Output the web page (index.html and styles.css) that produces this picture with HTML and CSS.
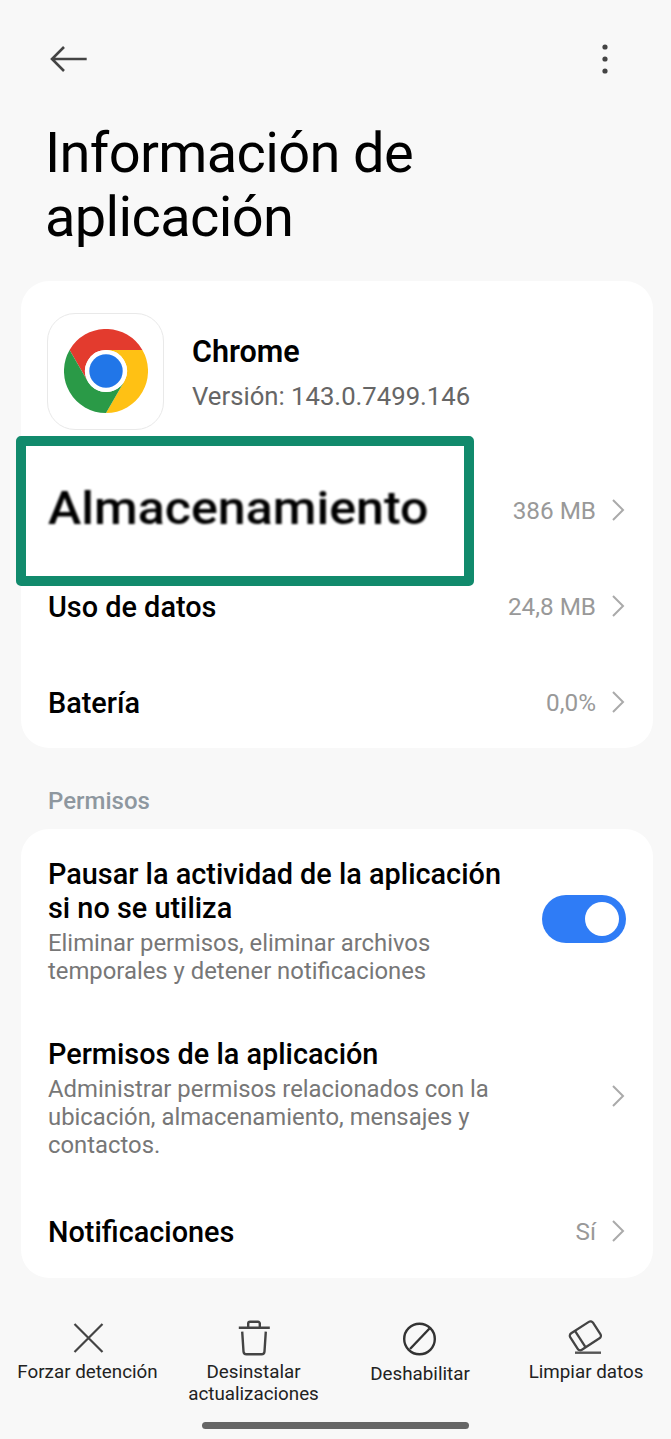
FILE: index.html
```html
<html>

<head>
    <meta charset="UTF-8">
    <meta name="viewport" content="width=device-width, initial-scale=1.0">
    <link rel="stylesheet" href="styles.css">
</head>

<body>
    <div class="page">
        <div class="topbar">
            <svg class="back" width="40" height="28" viewBox="0 0 40 28"><path d="M38.700 14H4M16 2 4 14l12 12" fill="none" stroke="#444" stroke-width="2.600"/></svg>
            <svg class="more" width="6" height="30" viewBox="0 0 6 30"><circle cx="3" cy="3" r="2.600" fill="#444"/><circle cx="3" cy="15" r="2.600" fill="#444"/><circle cx="3" cy="27" r="2.600" fill="#444"/></svg>
        </div>
        <h1 class="title">Información de aplicación</h1>

        <div class="card main-card">
            <div class="app">
                <div class="app-icon">
                    <svg width="84" height="84" viewBox="0 0 84 84">
                        <path d="M5.600 21A42 42 0 0 1 78.400 21H42A21 21 0 0 0 23.800 52.500Z" fill="#e33b2e"/>
                        <path d="M78.400 21A42 42 0 0 1 42 84L60.200 52.500A21 21 0 0 0 42 21Z" fill="#ffc114"/>
                        <path d="M42 84A42 42 0 0 1 5.600 21L23.800 52.500A21 21 0 0 0 60.200 52.500Z" fill="#2a9a47"/>
                        <circle cx="42" cy="42" r="21" fill="#fff"/>
                        <circle cx="42" cy="42" r="16.700" fill="#2176e8"/>
                    </svg>
                </div>
                <div class="app-text">
                    <div class="app-name">Chrome</div>
                    <div class="app-version">Versión: 143.0.7499.146</div>
                </div>
            </div>
            <div class="row"><span class="label"></span><span class="value">386 MB</span><svg class="chev" width="14" height="22" viewBox="0 0 14 22"><path d="M2 1l10 10L2 21" fill="none" stroke="#aaa" stroke-width="2"/></svg></div>
            <div class="row"><span class="label">Uso de datos</span><span class="value">24,8 MB</span><svg class="chev" width="14" height="22" viewBox="0 0 14 22"><path d="M2 1l10 10L2 21" fill="none" stroke="#aaa" stroke-width="2"/></svg></div>
            <div class="row"><span class="label">Batería</span><span class="value">0,0%</span><svg class="chev" width="14" height="22" viewBox="0 0 14 22"><path d="M2 1l10 10L2 21" fill="none" stroke="#aaa" stroke-width="2"/></svg></div>
        </div>

        <div class="section">Permisos</div>

        <div class="card perm-card">
            <div class="perm first">
                <div class="perm-text">
                    <div class="label">Pausar la actividad de la aplicación si no se utiliza</div>
                    <div class="desc">Eliminar permisos, eliminar archivos temporales y detener notificaciones</div>
                </div>
                <div class="toggle"><span class="knob"></span></div>
            </div>
            <div class="perm second">
                <div class="perm-text">
                    <div class="label">Permisos de la aplicación</div>
                    <div class="desc">Administrar permisos relacionados con la ubicación, almacenamiento, mensajes y contactos.</div>
                </div>
                <svg class="chev" width="14" height="22" viewBox="0 0 14 22"><path d="M2 1l10 10L2 21" fill="none" stroke="#aaa" stroke-width="2"/></svg>
            </div>
            <div class="row last"><span class="label">Notificaciones</span><span class="value">Sí</span><svg class="chev" width="14" height="22" viewBox="0 0 14 22"><path d="M2 1l10 10L2 21" fill="none" stroke="#aaa" stroke-width="2"/></svg></div>
        </div>

        <div class="actions">
            <div class="action">
                <svg width="32" height="36" viewBox="0 0 32 36"><path d="M2.500 4l28 28M30.500 4l-28 28" fill="none" stroke="#444" stroke-width="2.200"/></svg>
                <span>Forzar detención</span>
            </div>
            <div class="action">
                <svg width="32" height="36" viewBox="0 0 32 36"><path d="M4.200 11.700 5.500 31.500a3 3 0 0 0 3 2.800h15a3 3 0 0 0 3-2.800L27.800 11.700M.8 7.700h31M10.200 7V3.500a1.800 1.800 0 0 1 1.800-1.800h8a1.800 1.800 0 0 1 1.800 1.800V7" fill="none" stroke="#444" stroke-width="2.400"/></svg>
                <span>Desinstalar actualizaciones</span>
            </div>
            <div class="action disable">
                <svg width="36" height="36" viewBox="0 0 36 36"><circle cx="17.500" cy="19" r="15.300" fill="none" stroke="#333" stroke-width="2.400"/><path d="M8 29 27.500 8.500" stroke="#333" stroke-width="2.400"/></svg>
                <span>Deshabilitar</span>
            </div>
            <div class="action">
                <svg width="36" height="36" viewBox="0 0 36 36"><g transform="translate(17.350 15.800) rotate(-33)" fill="none" stroke="#444" stroke-width="2.300"><rect x="-13.500" y="-9.800" width="27" height="19.600" rx="3"/><path d="M-6 -9.800V9.800"/></g><path d="M7 32.700h26" stroke="#555" stroke-width="2.400"/></svg>
                <span>Limpiar datos</span>
            </div>
        </div>
        <div class="home-bar"></div>

        <div class="highlight"><span>Almacenamiento</span></div>
    </div>
</body>

</html>
```

FILE: styles.css
```css
* {
    box-sizing: border-box;
}
html, body {
    margin: 0;
    padding: 0;
}
.page {
    position: relative;
    width: 671px;
    height: 1439px;
    overflow: hidden;
    background: #f8f8f8;
    font-family: Roboto, "Noto Sans", sans-serif;
    color: #000;
}
.topbar {
    display: flex;
    justify-content: space-between;
    align-items: center;
    height: 30px;
    margin-top: 44px;
    padding: 0 63px 0 48px;
}
.title {
    margin: 47px 0 0 45px;
    width: 420px;
    height: 128px;
    font-size: 56px;
    line-height: 64px;
    letter-spacing: -0.65px;
    font-weight: 400;
}
.card {
    margin: 0 18px 0 21px;
    background: #fff;
    border-radius: 28px;
}
.main-card {
    margin-top: 32px;
    height: 467px;
    padding: 32px 27px 21px;
}
.app {
    display: flex;
    align-items: center;
    height: 117px;
    margin-bottom: 57px;
}
.app-icon {
    display: flex;
    align-items: center;
    justify-content: center;
    width: 117px;
    height: 117px;
    margin-left: -1px;
    padding-bottom: 1px;
    border: 1px solid #e9e9e9;
    border-radius: 28px;
}
.app-text {
    margin-left: 28px;
    padding-top: 3px;
}
.app-name {
    font-size: 30.500px;
    font-weight: 600;
    line-height: 36px;
}
.app-version {
    margin-top: 10px;
    font-size: 25.700px;
    line-height: 32px;
    color: #666;
}
.row {
    display: flex;
    align-items: center;
    height: 48px;
    margin-bottom: 48px;
}
.row:last-child {
    margin-bottom: 0;
}
.label {
    font-size: 28.850px;
    line-height: 34px;
    font-weight: 500;
}
.row .label {
    flex: 1;
}
.value {
    margin-bottom: 2px;
    font-size: 24.300px;
    color: #999;
}
.chev {
    flex: none;
    margin-left: 15px;
    margin-right: 1px;
    margin-bottom: 2px;
}
.section {
    margin: 39px 0 0 48px;
    font-size: 24px;
    line-height: 28px;
    font-weight: 500;
    color: #8e979f;
}
.perm-card {
    margin-top: 14px;
    height: 449px;
    padding: 28px 27px 0;
}
.perm {
    display: flex;
    align-items: center;
    justify-content: space-between;
}
.perm-text {
    width: 470px;
}
.desc {
    margin-top: 4px;
    font-size: 23.850px;
    line-height: 28px;
    color: #777;
}
.perm.second {
    margin-top: 52px;
}
.perm.second .chev {
    margin-bottom: 4px;
}
.row.last {
    margin-top: 49px;
}
.toggle {
    position: relative;
    width: 84px;
    height: 48px;
    margin-bottom: 4px;
    border-radius: 24px;
    background: #2f7cf6;
}
.knob {
    position: absolute;
    top: 7px;
    right: 7px;
    width: 34px;
    height: 34px;
    border-radius: 50%;
    background: #fff;
}
.actions {
    display: grid;
    grid-template-columns: 167px 165px 168px 164px;
    padding: 42px 0 0 4px;
}
.action {
    display: flex;
    flex-direction: column;
    align-items: center;
    text-align: center;
    font-size: 18.800px;
    line-height: 22px;
    color: #222;
}
.action svg {
    margin-bottom: 5px;
}
.action.disable span {
    margin-top: 2px;
}
.home-bar {
    position: absolute;
    left: 202px;
    top: 1422px;
    width: 267px;
    height: 7px;
    border-radius: 4px;
    background: #666;
}
.highlight {
    position: absolute;
    left: 16px;
    top: 436px;
    width: 458px;
    height: 150px;
    padding: 0 0 7px 22px;
    display: flex;
    align-items: center;
    background: #fff;
    border: 10px solid #118a6c;
    border-radius: 5px;
    font-size: 46px;
    font-weight: 500;
}
.highlight span {
    transform: scaleX(1.09);
    transform-origin: left center;
    filter: blur(0.8px);
}
```
